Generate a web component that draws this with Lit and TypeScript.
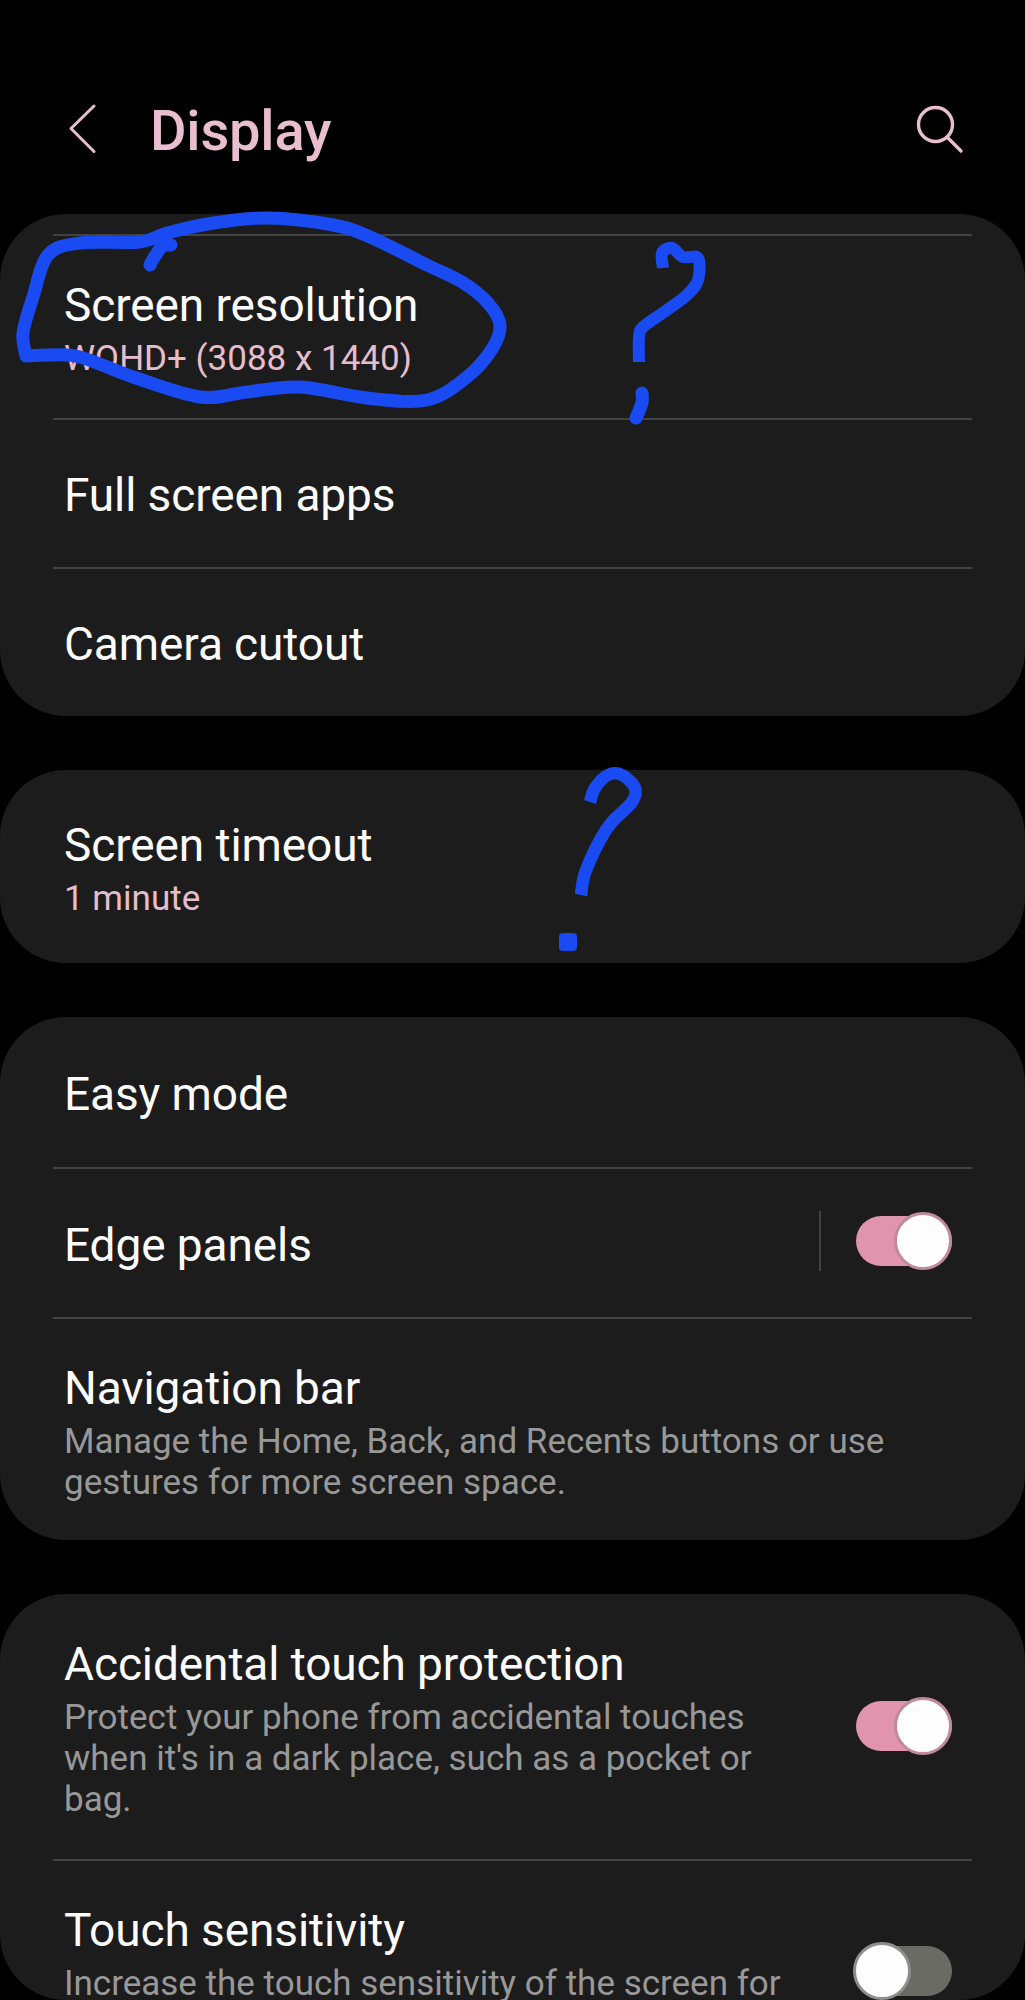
import { LitElement, html, css, nothing } from 'lit';
import { customElement } from 'lit/decorators.js';

interface Row {
  title: string;
  value?: string;
  desc?: string[];
  toggle?: 'on' | 'off';
  split?: boolean;
}

interface Card {
  cls: string;
  rows: Row[];
}

type Pt = [number, number];

const CARDS: Card[] = [
  {
    cls: 'first',
    rows: [
      { title: 'Screen resolution', value: 'WQHD+ (3088 x 1440)' },
      { title: 'Full screen apps' },
      { title: 'Camera cutout' },
    ],
  },
  {
    cls: 'timeout',
    rows: [{ title: 'Screen timeout', value: '1 minute' }],
  },
  {
    cls: 'mode',
    rows: [
      { title: 'Easy mode' },
      { title: 'Edge panels', toggle: 'on', split: true },
      {
        title: 'Navigation bar',
        desc: ['Manage the Home, Back, and Recents buttons or use', 'gestures for more screen space.'],
      },
    ],
  },
  {
    cls: 'touch',
    rows: [
      {
        title: 'Accidental touch protection',
        desc: ['Protect your phone from accidental touches', "when it's in a dark place, such as a pocket or", 'bag.'],
        toggle: 'on',
      },
      {
        title: 'Touch sensitivity',
        desc: ['Increase the touch sensitivity of the screen for'],
        toggle: 'off',
      },
    ],
  },
];

// Marker scribbles, traced from the screenshot in page pixels
const OVAL: Pt[] = [
  [26, 356], [23, 333], [33, 297], [48, 255], [80, 243], [140, 242], [167, 233], [213, 223],
  [267, 218], [333, 225], [370, 237], [427, 265], [462, 282], [488, 303], [500, 325], [492, 349], [467, 377],
  [427, 400], [367, 398], [300, 387], [247, 392], [200, 397], [133, 377], [80, 357], [50, 355], [26, 356],
];
const HOOK_ONE: Pt[] = [
  [663, 268], [662, 253], [672, 248], [683, 257], [698, 258], [698, 280], [687, 295], [667, 310],
  [643, 327], [639, 338], [639, 362],
];
const DOT_ONE: Pt[] = [[642, 393], [642, 403], [636, 418]];
const HOOK_TWO: Pt[] = [
  [590, 802], [595, 788], [608, 775], [622, 775], [635, 788], [632, 802], [612, 822], [600, 840],
  [585, 873], [581, 895],
];

// Catmull-Rom through the points, written as cubic beziers
function smooth(pts: Pt[]): string {
  let d = `M${pts[0][0]} ${pts[0][1]}`;
  for (let i = 0; i < pts.length - 1; i++) {
    const p0 = pts[i - 1] ?? pts[i];
    const p1 = pts[i];
    const p2 = pts[i + 1];
    const p3 = pts[i + 2] ?? p2;
    const c1x = p1[0] + (p2[0] - p0[0]) / 6;
    const c1y = p1[1] + (p2[1] - p0[1]) / 6;
    const c2x = p2[0] - (p3[0] - p1[0]) / 6;
    const c2y = p2[1] - (p3[1] - p1[1]) / 6;
    d += ` C${c1x.toFixed(1)} ${c1y.toFixed(1)} ${c2x.toFixed(1)} ${c2y.toFixed(1)} ${p2[0]} ${p2[1]}`;
  }
  return d;
}

@customElement('app-root')
export class AppRoot extends LitElement {
  static styles = css`
    :host {
      display: flex;
      flex-direction: column;
      position: relative;
      width: 1025px;
      height: 2000px;
      overflow: hidden;
      background: #000;
      font-family: Roboto, 'Liberation Sans', sans-serif;
      color: #fbfbfb;
    }

    .header {
      height: 214px;
      box-sizing: border-box;
      flex: none;
      display: flex;
      align-items: flex-start;
      padding: 101px 58px 0 66px;
    }

    .back {
      width: 34px;
      height: 54px;
      flex: none;
    }

    .page-title {
      margin-left: 50px;
      font-size: 56px;
      line-height: 60px;
      font-weight: 500;
      letter-spacing: -0.2px;
      color: #e9bfd0;
    }

    .search {
      width: 54px;
      height: 54px;
      margin-left: auto;
      flex: none;
    }

    .cards {
      flex: 1;
      min-height: 0;
      display: flex;
      flex-direction: column;
      gap: 54px;
    }

    .card {
      flex: none;
      background: #1c1c1c;
      border-radius: 66px;
      padding: 0 53px;
    }

    .card.first {
      padding-top: 20px;
    }

    .card.first .row:first-child {
      border-top: 2px solid #424242;
      padding-bottom: 39px;
    }

    .card.timeout {
      padding-block: 6px 3px;
    }

    .card.mode .row {
      min-height: 150px;
    }

    .card.mode .row.multi {
      padding-bottom: 37px;
    }

    .card.touch {
      flex: 1;
      min-height: 0;
      overflow: hidden;
    }

    .card.touch .row:first-child {
      padding-block: 45px 39px;
    }

    /* the row runs on past the bottom of the screen */
    .card.touch .row:last-child .text {
      margin-bottom: 41px;
    }

    .row {
      box-sizing: border-box;
      min-height: 149px;
      display: flex;
      align-items: center;
      padding: 3px 11px 0;
    }

    .row + .row {
      border-top: 2px solid #424242;
    }

    .row.multi {
      padding-block: 44px 41px;
    }

    .text {
      flex: 1;
      min-width: 0;
    }

    .title {
      font-size: 46px;
      line-height: 50px;
      letter-spacing: -0.1px;
      white-space: nowrap;
    }

    .value,
    .desc {
      font-size: 35px;
      line-height: 41px;
      white-space: nowrap;
    }

    .title + .value,
    .title + .desc {
      margin-top: 8px;
    }

    .value {
      color: #e6bdcd;
    }

    .desc {
      color: #989898;
    }

    .split {
      width: 2px;
      height: 60px;
      background: #424242;
      margin: -8px 35px 0 0;
      flex: none;
    }

    .switch {
      position: relative;
      width: 96px;
      height: 50px;
      border-radius: 25px;
      margin: -8px 9px 0 0;
      flex: none;
    }

    .switch.on {
      background: #e094ae;
    }

    .switch.off {
      background: #6b6b66;
    }

    .thumb {
      position: absolute;
      top: -4px;
      box-sizing: border-box;
      width: 58px;
      height: 58px;
      border-radius: 50%;
      background: #fdfdfd;
      border: 3px solid #bf8a9e;
    }

    .switch.on .thumb {
      right: 0;
    }

    .switch.off .thumb {
      left: -3px;
      border-color: #8e8e8e;
    }

    .ink {
      position: absolute;
      inset: 0;
      width: 1025px;
      height: 2000px;
      pointer-events: none;
    }
  `;

  private _renderRow(row: Row) {
    const multi = row.value || row.desc;
    return html`
      <div class="row ${multi ? 'multi' : ''}">
        <div class="text">
          <div class="title">${row.title}</div>
          ${row.value ? html`<div class="value">${row.value}</div>` : nothing}
          ${row.desc?.map((line) => html`<div class="desc">${line}</div>`)}
        </div>
        ${row.split ? html`<div class="split"></div>` : nothing}
        ${row.toggle
          ? html`<div class="switch ${row.toggle}"><div class="thumb"></div></div>`
          : nothing}
      </div>
    `;
  }

  render() {
    return html`
      <div class="header">
        <svg class="back" viewBox="0 0 34 54" fill="none" stroke="#e9bfd0" stroke-width="3" stroke-linecap="round" stroke-linejoin="round">
          <path d="M28 5 5 27.5l23 23" />
        </svg>
        <div class="page-title">Display</div>
        <svg class="search" viewBox="0 0 54 54" fill="none" stroke="#e9bfd0" stroke-width="3.4" stroke-linecap="round">
          <circle cx="22.5" cy="23.5" r="17" />
          <path d="m34 36 14 14" />
        </svg>
      </div>
      <div class="cards">
        ${CARDS.map(
          (card) => html`
            <div class="card ${card.cls}">${card.rows.map((row) => this._renderRow(row))}</div>
          `,
        )}
      </div>
      <svg class="ink" viewBox="0 0 1025 2000" fill="none" stroke="#1a4bf2" stroke-width="13" stroke-linecap="round" stroke-linejoin="round">
        <path d=${smooth(OVAL)} />
        <path d="M161 245 H171 M165 240 C160 250 154 256 150 265" />
        <path d=${smooth(HOOK_ONE)} stroke-width="12" stroke-linecap="butt" />
        <path d=${smooth(DOT_ONE)} stroke-width="13" />
        <path d=${smooth(HOOK_TWO)} stroke-width="12.5" stroke-linecap="butt" />
        <rect x="559" y="933" width="18" height="18" rx="4" fill="#1a4bf2" stroke="none" />
      </svg>
    `;
  }
}
